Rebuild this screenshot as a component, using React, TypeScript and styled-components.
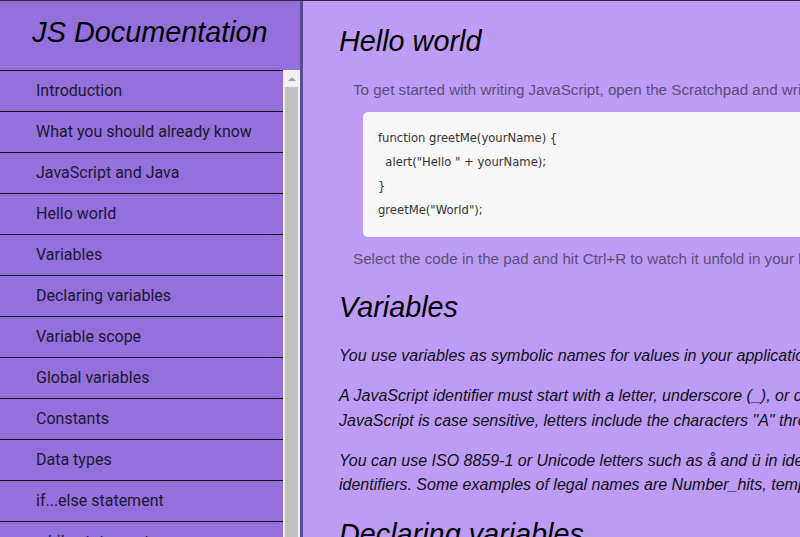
import React from "react";
import styled, { createGlobalStyle } from "styled-components";

const GlobalStyle = createGlobalStyle`
  html, body {
    margin: 0;
    padding: 0;
    height: 100%;
    overflow: hidden;
    background: #bd9cf8;
  }
  #root { height: 100%; }
`;

const Page = styled.div`
  display: flex;
  height: 100vh;
  box-sizing: border-box;
  border-top: 1px solid #2b2540;
`;

const Sidebar = styled.nav`
  flex: none;
  width: 300px;
  display: flex;
  flex-direction: column;
  background: #9370db;
  border-right: 3px solid #5d4a9c;
`;

const SidebarHeader = styled.header`
  height: 69px;
  display: flex;
  align-items: center;
  justify-content: center;
  flex: none;
`;

const Title = styled.h1`
  margin: 0 0 6px;
  font-family: "Liberation Sans", Arial, sans-serif;
  font-style: italic;
  font-weight: normal;
  font-size: 28.8px;
  color: #000;
`;

const NavArea = styled.div`
  flex: 1;
  min-height: 0;
  display: flex;
  overflow: hidden;
`;

const NavList = styled.ul`
  flex: 1;
  margin: 0;
  padding: 0;
  list-style: none;
`;

const NavItem = styled.li`
  border-top: 1px solid #111;
  display: flex;
  align-items: center;
  padding: 0 0 1px 36px;
  box-sizing: border-box;
  height: 41px;
  font-family: Roboto, "Liberation Sans", sans-serif;
  font-size: 16px;
  color: #1e1933;
`;

const Scrollbar = styled.div`
  flex: none;
  width: 17px;
  display: flex;
  flex-direction: column;
  background: #f1f1f1;
`;

const ScrollArrow = styled.div`
  height: 17px;
  display: flex;
  align-items: center;
  justify-content: center;
  &::after {
    content: "";
    border-left: 4px solid transparent;
    border-right: 4px solid transparent;
    border-bottom: 4px solid #a3a3a3;
  }
`;

const ScrollThumb = styled.div`
  flex: 1;
  margin: 0 2px;
  background: #c1c1c1;
`;

const Main = styled.main`
  flex: 1;
  min-width: 0;
  overflow: hidden;
  padding-left: 36px;
`;

const Content = styled.div`
  width: 1010px;
`;

const Section = styled.section`
  margin-bottom: 0;
`;

const Heading = styled.h2<{ $top: number }>`
  margin: ${(p) => p.$top}px 0 0;
  font-family: "Liberation Sans", Arial, sans-serif;
  font-style: italic;
  font-weight: normal;
  font-size: 28.8px;
  line-height: 33px;
  color: #000;
`;

const Lead = styled.p<{ $top: number }>`
  margin: ${(p) => p.$top}px 0 0 14px;
  font-family: "Liberation Sans", Arial, sans-serif;
  font-size: 15.2px;
  line-height: 18px;
  color: #5d4f76;
`;

const CodeBlock = styled.pre`
  margin: 13px 0 0 24px;
  padding: 14px 15px 15px;
  background: #f7f7f7;
  border-radius: 5px;
  font-family: "DejaVu Sans", Verdana, sans-serif;
  font-size: 11.6px;
  line-height: 24px;
  color: #333;
  white-space: pre;
`;

const Text = styled.p<{ $top?: number }>`
  margin: ${(p) => p.$top ?? 15.5}px 0 0;
  font-family: "Liberation Sans", Arial, sans-serif;
  font-style: italic;
  font-size: 16px;
  line-height: 24.5px;
  color: #111;
`;

const navItems = [
  "Introduction",
  "What you should already know",
  "JavaScript and Java",
  "Hello world",
  "Variables",
  "Declaring variables",
  "Variable scope",
  "Global variables",
  "Constants",
  "Data types",
  "if...else statement",
  "while statement",
  "Function declarations",
  "Reference",
];

const code = `function greetMe(yourName) {
  alert("Hello " + yourName);
}
greetMe("World");`;

export default function App() {
  return (
    <>
      <GlobalStyle />
      <Page>
        <Sidebar>
          <SidebarHeader>
            <Title>JS Documentation</Title>
          </SidebarHeader>
          <NavArea>
            <NavList>
              {navItems.map((item) => (
                <NavItem key={item}>{item}</NavItem>
              ))}
            </NavList>
            <Scrollbar>
              <ScrollArrow />
              <ScrollThumb />
            </Scrollbar>
          </NavArea>
        </Sidebar>
        <Main>
          <Content>
            <Section>
              <Heading $top={24}>Hello world</Heading>
              <Lead $top={23}>
                To get started with writing JavaScript, open the Scratchpad and write your first "Hello world" JavaScript code:
              </Lead>
              <CodeBlock>{code}</CodeBlock>
              <Lead $top={13}>
                Select the code in the pad and hit Ctrl+R to watch it unfold in your browser!
              </Lead>
            </Section>
            <Section>
              <Heading $top={23}>Variables</Heading>
              <Text $top={20}>
                You use variables as symbolic names for values in your application. The names of variables, called identifiers, conform to certain rules.
              </Text>
              <Text>
                A JavaScript identifier must start with a letter, underscore (_), or dollar sign ($); subsequent characters can also be digits (0-9). Because JavaScript is case sensitive, letters include the characters "A" through "Z" (uppercase) and the characters "a" through "z" (lowercase).
              </Text>
              <Text>
                You can use ISO 8859-1 or Unicode letters such as å and ü in identifiers. You can also use the Unicode escape sequences as characters in identifiers. Some examples of legal names are Number_hits, temp99, and _name.
              </Text>
            </Section>
            <Section>
              <Heading $top={20}>Declaring variables</Heading>
            </Section>
          </Content>
        </Main>
      </Page>
    </>
  );
}
